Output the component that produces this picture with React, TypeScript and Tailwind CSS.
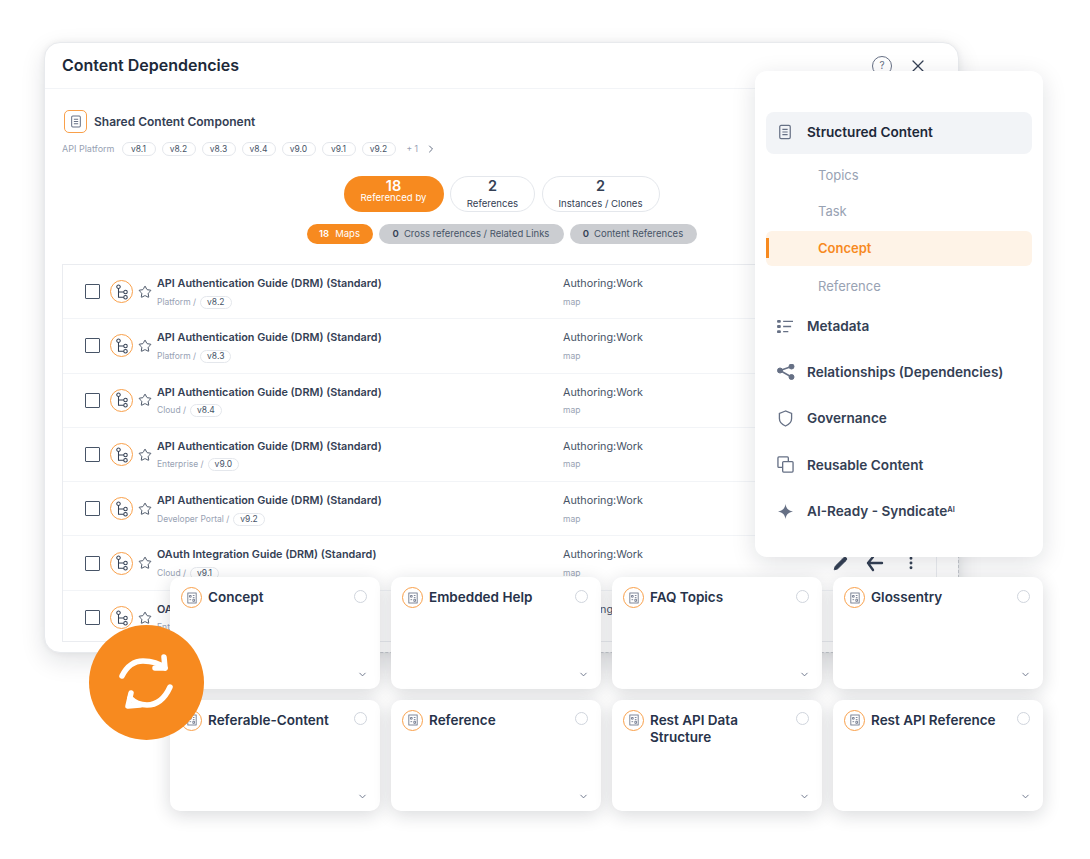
import { ChevronDown, ChevronRight, EllipsisVertical, Pencil, Star, X } from "lucide-react";

const VERSIONS = ["v8.1", "v8.2", "v8.3", "v8.4", "v9.0", "v9.1", "v9.2"];

const ROWS = [
  { title: "API Authentication Guide (DRM) (Standard)", path: "Platform /", version: "v8.2" },
  { title: "API Authentication Guide (DRM) (Standard)", path: "Platform /", version: "v8.3" },
  { title: "API Authentication Guide (DRM) (Standard)", path: "Cloud /", version: "v8.4" },
  { title: "API Authentication Guide (DRM) (Standard)", path: "Enterprise /", version: "v9.0" },
  { title: "API Authentication Guide (DRM) (Standard)", path: "Developer Portal /", version: "v9.2" },
  { title: "OAuth Integration Guide (DRM) (Standard)", path: "Cloud /", version: "v9.1" },
  { title: "OAuth Integration Guide (DRM) (Standard)", path: "Enterprise /", version: "v9.0" },
];

const CARDS = [
  "Concept",
  "Embedded Help",
  "FAQ Topics",
  "Glossentry",
  "Referable-Content",
  "Reference",
  "Rest API Data Structure",
  "Rest API Reference",
];

function DocIcon({ className }: { className: string }) {
  return (
    <svg viewBox="0 0 16 18" fill="none" stroke="currentColor" strokeWidth="1.4" className={className}>
      <rect x="2" y="1.500" width="12" height="15" rx="1.500" />
      <path d="M5 6h6M5 9h6M5 12h6" />
    </svg>
  );
}

function MapIcon() {
  return (
    <span className="flex h-[23px] w-[23px] shrink-0 items-center justify-center rounded-full border-[1.5px] border-[#f9a04a] text-[#344054]">
      <svg viewBox="0 0 16 18" fill="none" stroke="currentColor" strokeWidth="1.2" className="h-[16px] w-[14px]">
        <circle cx="4" cy="3" r="2" />
        <circle cx="12" cy="9" r="2" />
        <circle cx="12" cy="15" r="2" />
        <path d="M4 5v10h6M4 9h6" />
      </svg>
    </span>
  );
}

function TypeIcon() {
  return (
    <span className="flex h-[21px] w-[21px] shrink-0 items-center justify-center rounded-full border-[1.5px] border-[#f9a04a] text-[#667085]">
      <svg viewBox="0 0 12 14" fill="none" stroke="currentColor" strokeWidth="1" className="h-[12px] w-[10px]">
        <rect x="1" y="1" width="10" height="12" />
        <path d="M3 4h2v2H3zM7 4h2M7 6.500h2M3 9h2M7 8.500h2v2.500H7z" />
      </svg>
    </span>
  );
}

function Chip({ label, small }: { label: string; small?: boolean }) {
  return (
    <span
      className={`flex items-center justify-center rounded-full border border-[#e4e7ec] bg-white text-[#475467] ${
        small ? "h-[13px] px-[6px] text-[8.500px]" : "h-[14px] w-[34px] text-[8.500px]"
      }`}
    >
      {label}
    </span>
  );
}

function Row({ title, path, version }: { title: string; path: string; version: string }) {
  return (
    <div className="flex h-[54.300px] shrink-0 border-b border-[#f2f4f7] last:border-b-0">
      <div className="flex w-[500px] shrink-0 items-center pl-[22px]">
        <span className="mr-[10px] h-[15px] w-[15px] shrink-0 rounded-[1px] border-[1.5px] border-[#475467]" />
        <MapIcon />
        <Star className="ml-[5px] h-[14px] w-[14px] shrink-0 text-[#344054]" strokeWidth={1.5} />
        <div className="ml-[5px] flex flex-col gap-[4.500px] self-start pt-[12px]">
          <span className="text-[10.800px] leading-[14px] font-semibold text-[#344054]">{title}</span>
          <div className="flex items-center gap-[4px] text-[8.500px] leading-[13px] text-[#98a2b3]">
            {path}
            <Chip label={version} small />
          </div>
        </div>
      </div>
      <div className="flex flex-col gap-[4.500px] pt-[12px]">
        <span className="text-[10.800px] leading-[14px] text-[#475467]">Authoring:Work</span>
        <span className="text-[8.500px] leading-[13px] text-[#98a2b3]">map</span>
      </div>
    </div>
  );
}

function MenuItem({ icon, label }: { icon: React.ReactNode; label: React.ReactNode }) {
  return (
    <div className="flex h-[46.250px] items-center">
      <span className="flex w-[41px] justify-center pr-[2px] text-[#667085]">{icon}</span>
      <span className="text-[13.600px] font-semibold text-[#344054]">{label}</span>
    </div>
  );
}

export default function App() {
  return (
    <div className="relative h-[859px] w-[1090px] overflow-hidden bg-white [font-family:Inter,sans-serif]">
      {/* main window */}
      <div className="absolute top-[42px] left-[44px] flex h-[611px] w-[915px] flex-col rounded-[16px] border border-[#e8eaed] bg-white shadow-[0_0_6px_rgba(16,24,40,0.06),0_8px_24px_rgba(16,24,40,0.12)]">
        <div className="flex h-[46px] shrink-0 items-center justify-between border-b border-[#f2f4f7] pr-[30px] pl-[17px]">
          <span className="-translate-y-[1px] text-[16px] font-semibold text-[#1d2939]">Content Dependencies</span>
          <div className="flex items-center gap-[16px] text-[#344054]">
            <span className="flex h-[20px] w-[20px] items-center justify-center rounded-full border-[1.5px] border-[#667085] text-[10px] text-[#667085]">
              ?
            </span>
            <X className="h-[20px] w-[20px]" strokeWidth={1.5} />
          </div>
        </div>
        <div className="flex min-h-0 flex-1 flex-col px-[17px] pt-[21px]">
          <div className="ml-[2px] flex items-center gap-[7px]">
            <span className="flex h-[23px] w-[23px] items-center justify-center rounded-[5px] border-[1.5px] border-[#f9a04a] text-[#667085]">
              <DocIcon className="h-[13px] w-[12px]" />
            </span>
            <span className="text-[12px] font-semibold text-[#344054]">Shared Content Component</span>
          </div>
          <div className="mt-[9px] flex items-center gap-[6px] text-[8.500px] text-[#98a2b3]">
            <span className="mr-[1px] text-[9px]">API Platform</span>
            {VERSIONS.map((v) => (
              <Chip key={v} label={v} />
            ))}
            <span className="ml-[5px]">+ 1</span>
            <ChevronRight className="ml-[1px] h-[12px] w-[12px] text-[#667085]" />
          </div>
          <div className="mt-[20px] flex justify-center gap-[6.500px]">
            <div className="flex h-[36px] w-[100px] flex-col items-center rounded-full bg-[#f78a1f] pt-[3px] text-white">
              <span className="text-[14.500px] leading-[14px] font-semibold">18</span>
              <span className="text-[9.600px] leading-[10px]">Referenced by</span>
            </div>
            <div className="flex h-[36px] w-[85px] flex-col items-center justify-center gap-[6px] rounded-full border border-[#e4e7ec] text-[#344054]">
              <span className="text-[14.500px] leading-[13px] font-semibold">2</span>
              <span className="text-[9.600px] leading-[12px]">References</span>
            </div>
            <div className="flex h-[36px] w-[118px] flex-col items-center justify-center gap-[6px] rounded-full border border-[#e4e7ec] text-[#344054]">
              <span className="text-[14.500px] leading-[13px] font-semibold">2</span>
              <span className="text-[9.600px] leading-[12px]">Instances / Clones</span>
            </div>
          </div>
          <div className="mt-[12px] flex justify-center gap-[6px] text-[9.500px]">
            <span className="flex h-[20px] w-[66px] items-center justify-center gap-[6px] rounded-full bg-[#f78a1f] text-white">
              <b className="font-semibold">18</b> Maps
            </span>
            <span className="flex h-[20px] w-[185px] items-center justify-center gap-[5px] rounded-full bg-[#cbcdd1] text-[#475467]">
              <b className="font-semibold text-[#344054]">0</b> Cross references / Related Links
            </span>
            <span className="flex h-[20px] w-[127px] items-center justify-center gap-[5px] rounded-full bg-[#cbcdd1] text-[#475467]">
              <b className="font-semibold text-[#344054]">0</b> Content References
            </span>
          </div>
          <div className="mt-[20px] flex h-[378px] w-[875px] flex-col overflow-hidden border border-[#eaecf0]">
            {ROWS.map((row, i) => (
              <Row key={i} {...row} />
            ))}
          </div>
        </div>
      </div>

      {/* dashed guide on the window edge, seen between the cards */}
      <div className="absolute top-[540px] left-[170px] h-[113px] w-[789px] border-r border-b border-dashed border-[#c4c7cc]" />

      {/* row actions peeking out below the menu */}
      <div className="absolute top-[554px] left-[833px] flex items-center gap-[18px] text-[#344054]">
        <Pencil className="h-[15px] w-[15px]" fill="currentColor" strokeWidth={1.5} />
        <svg viewBox="0 0 18 18" fill="none" stroke="currentColor" strokeWidth="2.400" strokeLinecap="round" strokeLinejoin="round" className="h-[18px] w-[18px]">
          <path d="M2 9h14M7 3 2 9l5 7" />
        </svg>
        <EllipsisVertical className="ml-[1px] h-[16px] w-[16px]" strokeWidth={2.4} />
      </div>

      {/* side menu */}
      <div className="absolute top-[71px] left-[755px] flex h-[486px] w-[288px] flex-col rounded-[12px] bg-white px-[11px] pt-[41px] shadow-[0_6px_24px_rgba(16,24,40,0.13)]">
        <div className="flex h-[42px] items-center rounded-[8px] bg-[#f2f4f7] pb-[2px]">
          <span className="flex w-[41px] justify-center pr-[4px] text-[#667085]">
            <DocIcon className="h-[16px] w-[14px]" />
          </span>
          <span className="text-[13.600px] font-semibold text-[#1d2939]">Structured Content</span>
        </div>
        <div className="mt-[1px] flex h-[41px] items-center pl-[52px] text-[13px] text-[#98a2b3]">Topics</div>
        <div className="-mt-[5px] flex h-[41px] items-center pl-[52px] text-[13px] text-[#98a2b3]">Task</div>
        <div className="relative -mt-[1.5px] flex h-[35px] items-center rounded-[6px] bg-[#fef3e7] pt-[1px] pl-[52px] text-[13px] font-semibold text-[#f78a1f]">
          <span className="absolute top-[7px] left-0 h-[20px] w-[3px] bg-[#f78a1f]" />
          Concept
        </div>
        <div className="flex h-[41px] items-center pt-[1px] pl-[52px] text-[13px] text-[#98a2b3]">Reference</div>
        <div className="-mt-[3.500px] flex flex-col">
          <MenuItem
            label="Metadata"
            icon={
              <svg viewBox="0 0 18 16" fill="none" className="h-[15px] w-[17px]">
                <g fill="currentColor">
                  <rect x="0" y="1" width="4" height="3" rx="1" />
                  <rect x="0" y="6.500" width="4" height="3" rx="1" />
                  <rect x="0" y="12" width="4" height="3" rx="1" />
                </g>
                <path d="M6.500 2.500H17M6.500 8H15M6.500 13.500H12" stroke="currentColor" strokeWidth="1.500" />
              </svg>
            }
          />
          <MenuItem
            label="Relationships (Dependencies)"
            icon={
              <svg viewBox="0 0 18 16" className="h-[16px] w-[18px]" fill="currentColor" stroke="currentColor">
                <circle cx="3" cy="6.500" r="2.500" />
                <circle cx="14.500" cy="2.500" r="2.500" />
                <circle cx="14.500" cy="13" r="2.500" />
                <path d="M3 6.500 14.500 2.500M3 6.500l11.500 6.500" strokeWidth="1.500" />
              </svg>
            }
          />
          <MenuItem
            label="Governance"
            icon={
              <svg viewBox="0 0 16 18" fill="none" stroke="currentColor" strokeWidth="1.400" className="h-[17px] w-[15px]">
                <path d="M8 1 1.500 3.500v5.500c0 4 3 6.500 6.500 8 3.500-1.500 6.500-4 6.500-8V3.500z" />
              </svg>
            }
          />
          <MenuItem
            label="Reusable Content"
            icon={
              <svg viewBox="0 0 18 18" fill="none" stroke="currentColor" strokeWidth="1.400" className="h-[17px] w-[17px]">
                <rect x="1" y="1" width="11" height="11" rx="1" />
                <rect x="6" y="6" width="11" height="11" rx="1" fill="white" />
              </svg>
            }
          />
          <MenuItem
            label={
              <>
                AI-Ready - Syndicate<sup className="text-[7.500px]">AI</sup>
              </>
            }
            icon={
              <svg viewBox="0 0 16 16" fill="currentColor" className="h-[15px] w-[15px]">
                <path d="M8 0c.7 4.500 2.800 7 8 8-5.200 1-7.300 3.500-8 8-.7-4.500-2.800-7-8-8 5.200-1 7.300-3.500 8-8z" />
              </svg>
            }
          />
        </div>
      </div>

      {/* type cards */}
      <div className="absolute top-[577px] left-[170px] grid w-[873px] grid-cols-4 gap-[11px]">
        {CARDS.map((card) => (
          <div
            key={card}
            className="relative flex h-[111.500px] gap-[6px] rounded-[10px] bg-white pt-[10px] pr-[34px] pl-[11px] shadow-[0_4px_18px_rgba(16,24,40,0.16)]"
          >
            <TypeIcon />
            <span className="mt-[2px] text-[13.500px] leading-[17px] font-semibold text-[#27334a]">{card}</span>
            <span className="absolute top-[12.500px] right-[13.500px] h-[13px] w-[13px] rounded-full border-[1.5px] border-[#d0d5dd]" />
            <ChevronDown className="absolute right-[12px] bottom-[9px] h-[11px] w-[11px] text-[#667085]" strokeWidth={2} />
          </div>
        ))}
      </div>

      {/* sync badge */}
      <div className="absolute top-[625px] left-[89px] h-[115px] w-[115px] rounded-full bg-[#f78a1f]">
        <svg viewBox="0 0 115 115" fill="none" stroke="white" strokeWidth="5.500" strokeLinecap="round" strokeLinejoin="round" className="h-[115px] w-[115px]">
          <path d="M33 51C38 41 46 36 54 36C63 36 70 38 76 43" />
          <path d="M75 32l1 11H66" />
          <path d="M81 62C76 73 68 80 58 80C50 80 45 77 41 73" />
          <path d="M42 68l-3 13 12-1" />
        </svg>
      </div>
    </div>
  );
}
